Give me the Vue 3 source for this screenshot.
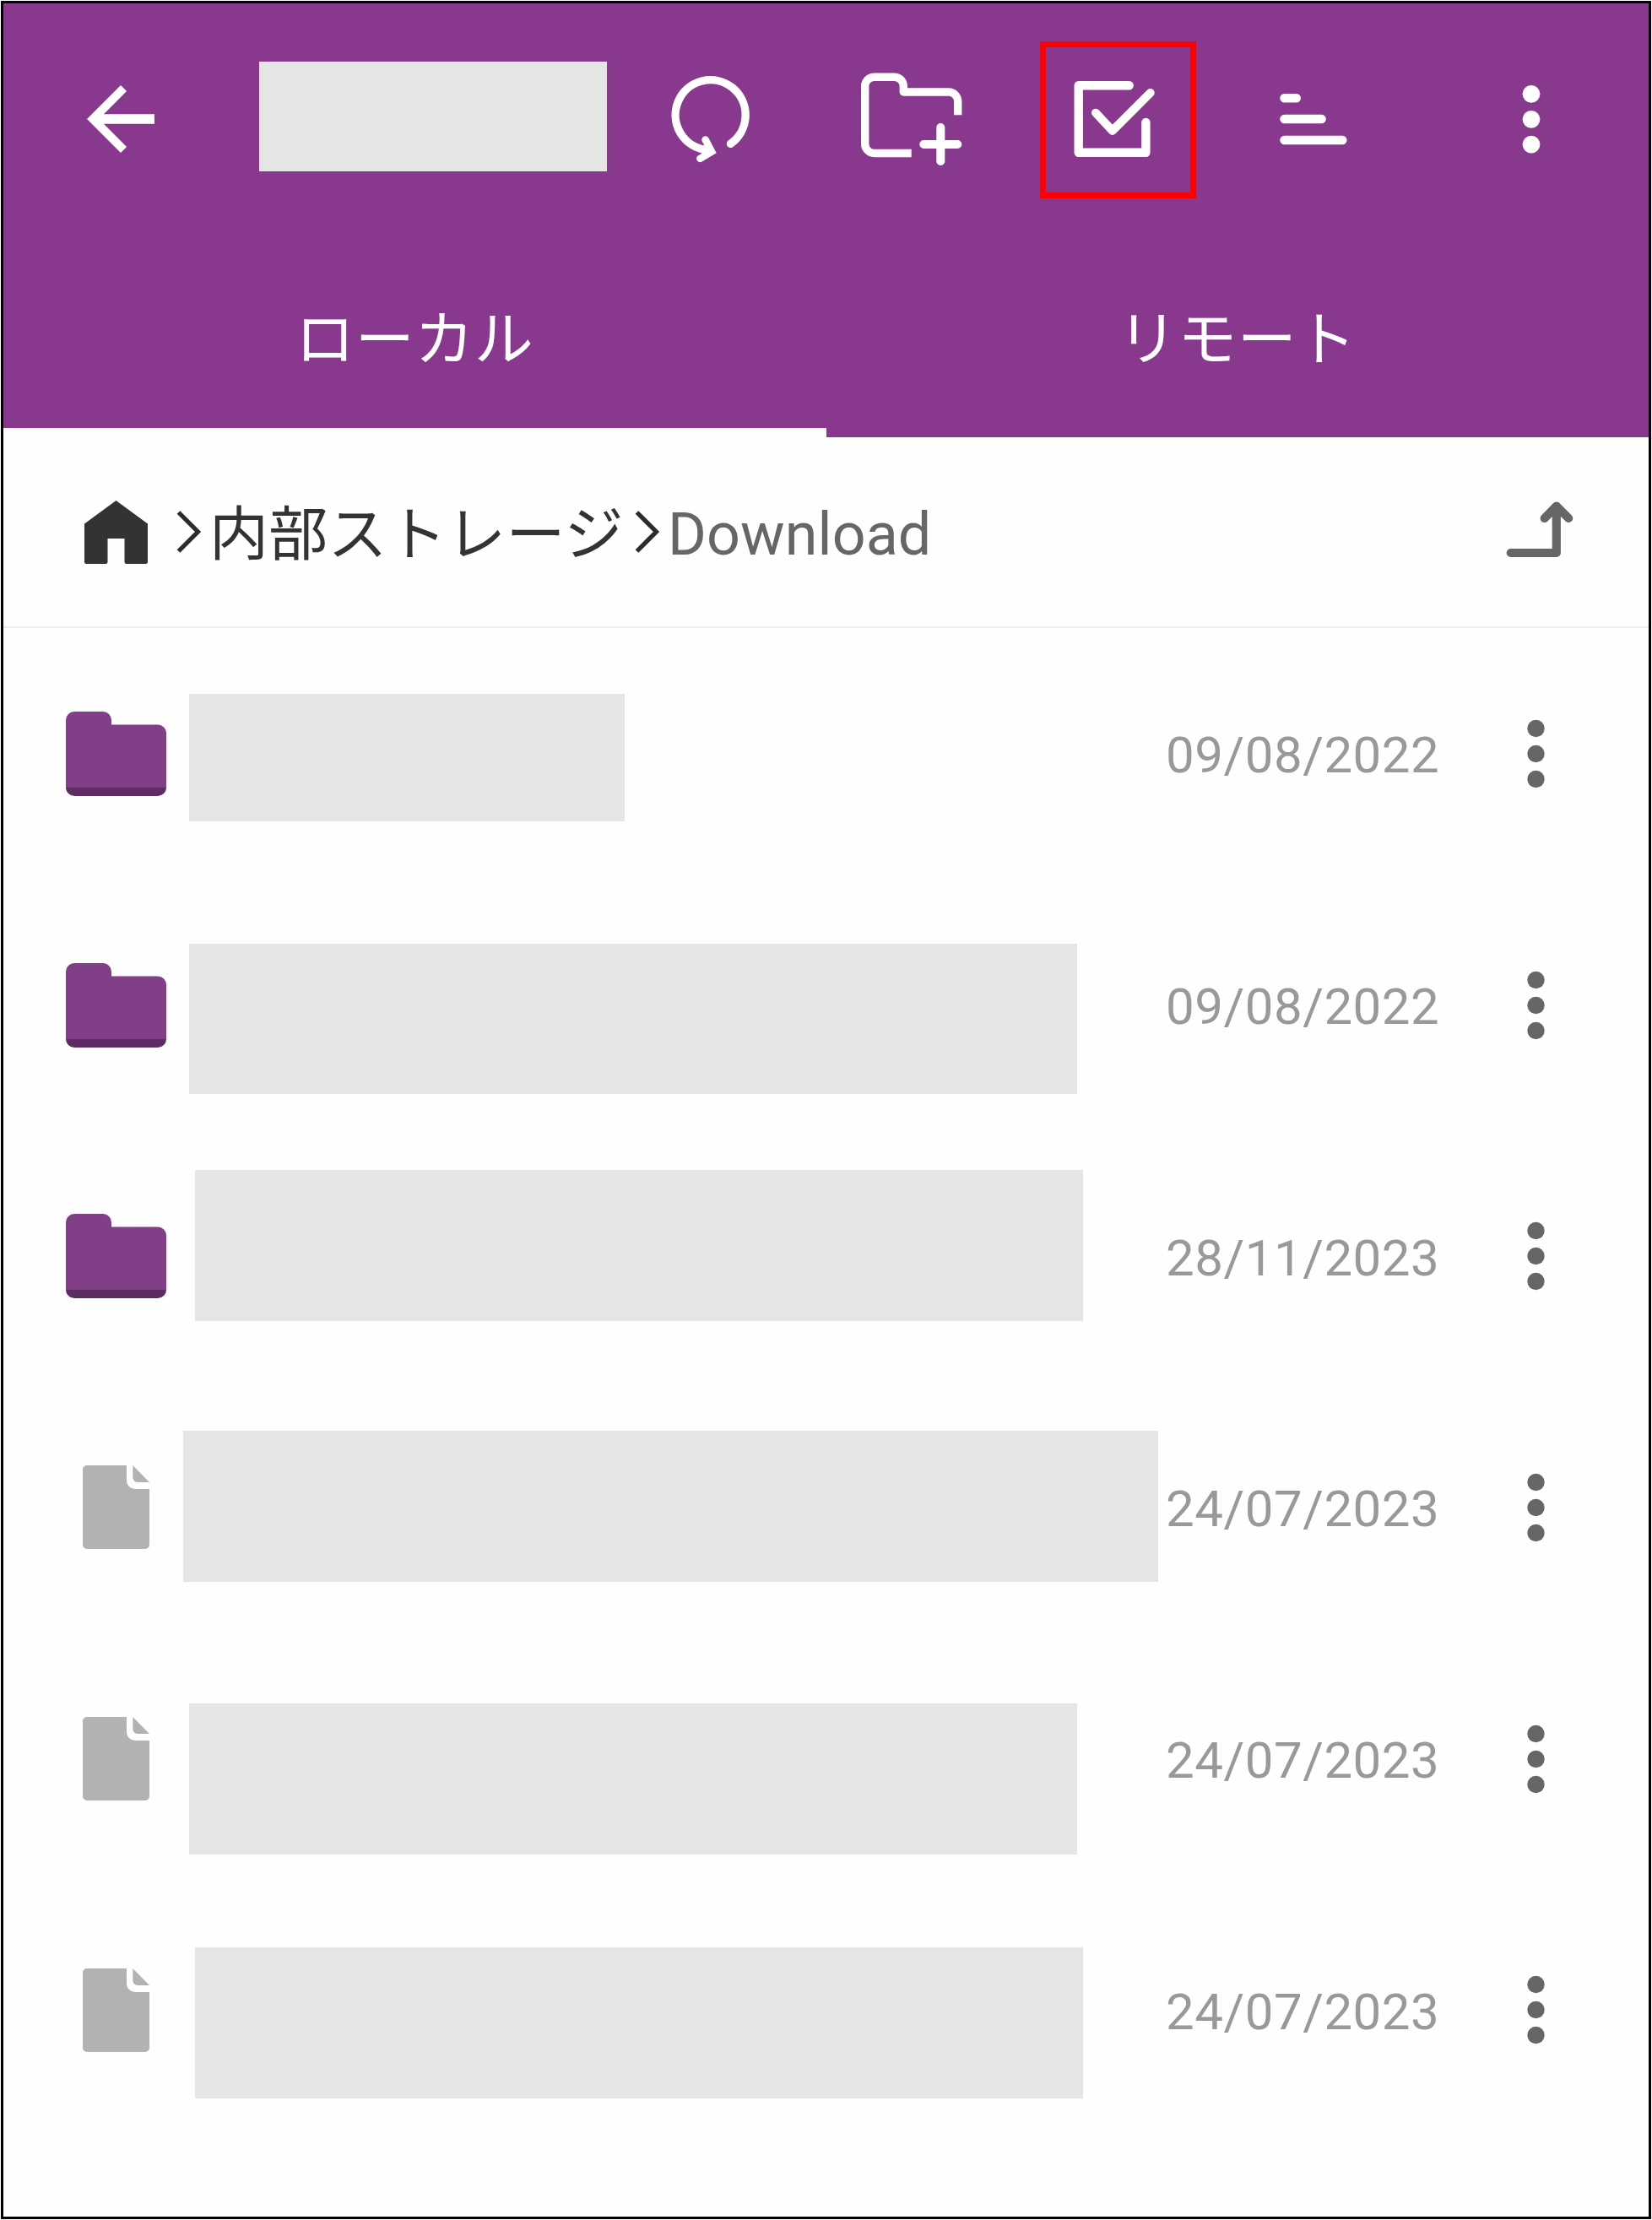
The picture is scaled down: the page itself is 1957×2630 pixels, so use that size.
<script setup>
import { ref } from 'vue'

const activeTab = ref('local')

const tabs = [
  { id: 'local', label: 'ローカル' },
  { id: 'remote', label: 'リモート' },
]

// mask: placeholder block over the file name
const entries = [
  { type: 'folder', date: '09/08/2022', mask: { x: 7, y: 78, w: 516, h: 151 } },
  { type: 'folder', date: '09/08/2022', mask: { x: 7, y: 76.4, w: 1052, h: 178 } },
  { type: 'folder', date: '28/11/2023', mask: { x: 14, y: 46.7, w: 1052, h: 179 } },
  { type: 'file', date: '24/07/2023', mask: { x: 0, y: 58, w: 1155, h: 179 } },
  { type: 'file', date: '24/07/2023', mask: { x: 7, y: 83.3, w: 1052, h: 179 } },
  { type: 'file', date: '24/07/2023', mask: { x: 14, y: 74.6, w: 1052, h: 179 } },
]

const maskStyle = (m) => ({
  marginLeft: `${m.x}px`,
  marginTop: `${m.y}px`,
  width: `${m.w}px`,
  height: `${m.h}px`,
})
</script>

<template>
  <div class="screen">
    <header class="header">
      <div class="toolbar">
        <svg class="icon" viewBox="0 0 24 24" fill="currentColor">
          <path d="M20 10.85H7.98l5.43-5.44L12 4l-8 8 8 8 1.41-1.41-5.43-5.44H20z" />
        </svg>
        <div class="toolbar__title"></div>
        <svg class="icon icon--line icon--refresh" viewBox="0 0 120 120">
          <path d="M84.4 89.3A41.5 41.5 0 1 0 56 96.5" />
          <path d="M54.6 84.5l7.4 14.2-13.6 8.2" stroke-width="8.6" stroke-linejoin="miter" />
        </svg>
        <svg class="icon icon--line icon--new-folder" viewBox="0 0 120 120">
          <path
            d="M59.7 100.5H15.7a11 11 0 0 1-11-11V21.2a11 11 0 0 1 11-11H39.3a11 11 0 0 1 11 11V28H103.7a11 11 0 0 1 11 11V55.3"
            stroke-linecap="butt"
          />
          <path d="M94.3 70v40M74.3 90h40" stroke-width="10" />
        </svg>
        <div class="toolbar__select">
          <svg class="icon--line" viewBox="0 0 171 172" width="171" height="172">
            <path d="M98.7 45.3H38.7V124.7H118.4V89" stroke-width="10.4" />
            <path d="M59 77.7L78.8 98.9 123.7 54" stroke-width="10" />
          </svg>
        </div>
        <svg class="icon icon--line icon--sort" viewBox="0 0 120 120">
          <path d="M25.5 35.3H39.7M25.5 60H69.6M25.5 85H94.3" stroke-width="10.5" />
        </svg>
        <svg class="icon icon--more" viewBox="0 0 120 120" fill="currentColor">
          <circle cx="60" cy="30.3" r="10.4" />
          <circle cx="60" cy="60.3" r="10.4" />
          <circle cx="60" cy="90.1" r="10.4" />
        </svg>
      </div>
      <nav class="tabs">
        <div
          v-for="tab in tabs"
          :key="tab.id"
          class="tabs__item"
          :class="{ 'tabs__item--active': tab.id === activeTab }"
          @click="activeTab = tab.id"
        >
          {{ tab.label }}
        </div>
      </nav>
    </header>

    <div class="path">
      <svg class="path__home" viewBox="0 0 75 75" width="75" height="75" fill="currentColor">
        <path d="M37.5 0L75 27.5V72.5a2.5 2.5 0 0 1-2.5 2.5H50a2.5 2.5 0 0 1-2.5-2.5V45H27.5V72.5a2.5 2.5 0 0 1-2.5 2.5H2.5A2.5 2.5 0 0 1 0 72.5V27.5z" />
      </svg>
      <svg class="path__sep path__sep--first" viewBox="0 0 30 52" width="30" height="52">
        <path d="M2.5 3L25.5 26 2.5 49" />
      </svg>
      <span class="path__part">内部ストレージ</span>
      <svg class="path__sep path__sep--second" viewBox="0 0 30 52" width="30" height="52">
        <path d="M2.5 3L25.5 26 2.5 49" />
      </svg>
      <span class="path__part path__part--current">Download</span>
      <svg class="path__up" viewBox="0 0 80 72" width="80" height="72">
        <path d="M6.7 61H60.8V8M46.7 20L60.8 5.5 75.2 20" />
      </svg>
    </div>

    <ul class="list">
      <li v-for="(entry, i) in entries" :key="i" class="row">
        <div class="row__icon">
          <svg v-if="entry.type === 'folder'" viewBox="0 0 119 100" width="119" height="100">
            <path fill="#5c2c62" d="M0 50H119V90a10 10 0 0 1-10 10H10A10 10 0 0 1 0 90z" />
            <path fill="#813f88" d="M10 0H44a10 10 0 0 1 10 10V15.5H109a10 10 0 0 1 10 10V90H0V10A10 10 0 0 1 10 0z" />
          </svg>
          <svg v-else viewBox="0 0 79 99" width="79" height="99" fill="#b2b2b2">
            <path d="M5 0H52V18a10 10 0 0 0 10 10H79V94a5 5 0 0 1-5 5H5a5 5 0 0 1-5-5V5a5 5 0 0 1 5-5z" />
            <path d="M59.3 0L79 20H65a5.7 5.7 0 0 1-5.7-5.7z" />
          </svg>
        </div>
        <div class="row__name">
          <div class="row__mask" :style="maskStyle(entry.mask)"></div>
        </div>
        <span class="row__date">{{ entry.date }}</span>
        <svg class="row__more" viewBox="0 0 22 82" width="22" height="82" fill="currentColor">
          <circle cx="10.5" cy="11" r="10.2" />
          <circle cx="10.5" cy="41" r="10.2" />
          <circle cx="10.5" cy="71" r="10.2" />
        </svg>
      </li>
    </ul>
  </div>
</template>

<style>
body {
  background: #fff;
}
</style>

<style scoped>
.screen {
  box-sizing: border-box;
  width: 1955px;
  height: 2628px;
  margin: 1px;
  border: 3px solid #000;
  background: #fefefe;
  font-family: Roboto, 'Noto Sans CJK JP', sans-serif;
  overflow: hidden;
}

svg {
  display: block;
  flex: none;
  overflow: visible;
}

.header {
  height: 514px;
  background: #89398d;
  color: #fff;
}

.toolbar {
  display: flex;
  align-items: center;
  height: 274px;
  padding-left: 79px;
}

.toolbar__title {
  width: 412px;
  height: 130px;
  margin: 0 0 6px 104px;
  background: #e5e5e5;
}

.toolbar__select {
  margin: 2px 0 0 92px;
  border: 7px solid #f00;
}

.icon {
  width: 120px;
  height: 120px;
}

.icon--line {
  fill: none;
  stroke: currentColor;
  stroke-width: 9.4;
  stroke-linecap: round;
  stroke-linejoin: round;
}

.icon--refresh {
  margin-left: 62px;
}

.icon--new-folder {
  margin-left: 119px;
}

.icon--sort {
  margin-left: 79px;
}

.icon--more {
  margin-left: 138px;
}

.tabs {
  display: grid;
  grid-template-columns: 1fr 1fr;
  height: 240px;
}

.tabs__item {
  box-sizing: border-box;
  padding-top: 75px;
  border-bottom: 11px solid transparent;
  font-size: 70px;
  line-height: 100px;
  letter-spacing: 0.6px;
  text-align: center;
}

.tabs__item--active {
  border-bottom-color: #fefefe;
}

.path {
  display: flex;
  align-items: center;
  box-sizing: border-box;
  height: 226px;
  padding-left: 96px;
  border-bottom: 2px solid #eee;
  color: #333;
}

.path__sep {
  fill: none;
  stroke: #2b2b2b;
  stroke-width: 5.2;
}

.path__sep--first {
  margin-left: 34px;
}

.path__sep--second {
  margin-left: 13px;
}

.path__part {
  width: 491px;
  margin-left: 9px;
  padding-top: 7px;
  font-size: 70px;
  line-height: 100px;
  letter-spacing: 0.3px;
  white-space: nowrap;
}

.path__part--current {
  width: auto;
  padding-top: 5px;
  letter-spacing: 0.1px;
  color: #666;
}

.path__up {
  margin: 0 90px 0 auto;
  fill: none;
  stroke: #666;
  stroke-width: 10.2;
  stroke-linecap: round;
  stroke-linejoin: round;
}

.list {
  margin: 0;
  padding: 0;
  list-style: none;
}

.row {
  display: grid;
  grid-template-columns: 213px 1164px 428px 22px;
  align-items: center;
  height: 297.7px;
}

.row__icon {
  display: flex;
  justify-content: center;
  width: 267px;
}

.row__name {
  align-self: start;
  display: flex;
}

.row__mask {
  background: #e5e5e5;
}

.row__date {
  padding-top: 4px;
  color: #999;
  font-size: 60px;
  letter-spacing: 0.5px;
}

.row__more {
  color: #666;
}
</style>
